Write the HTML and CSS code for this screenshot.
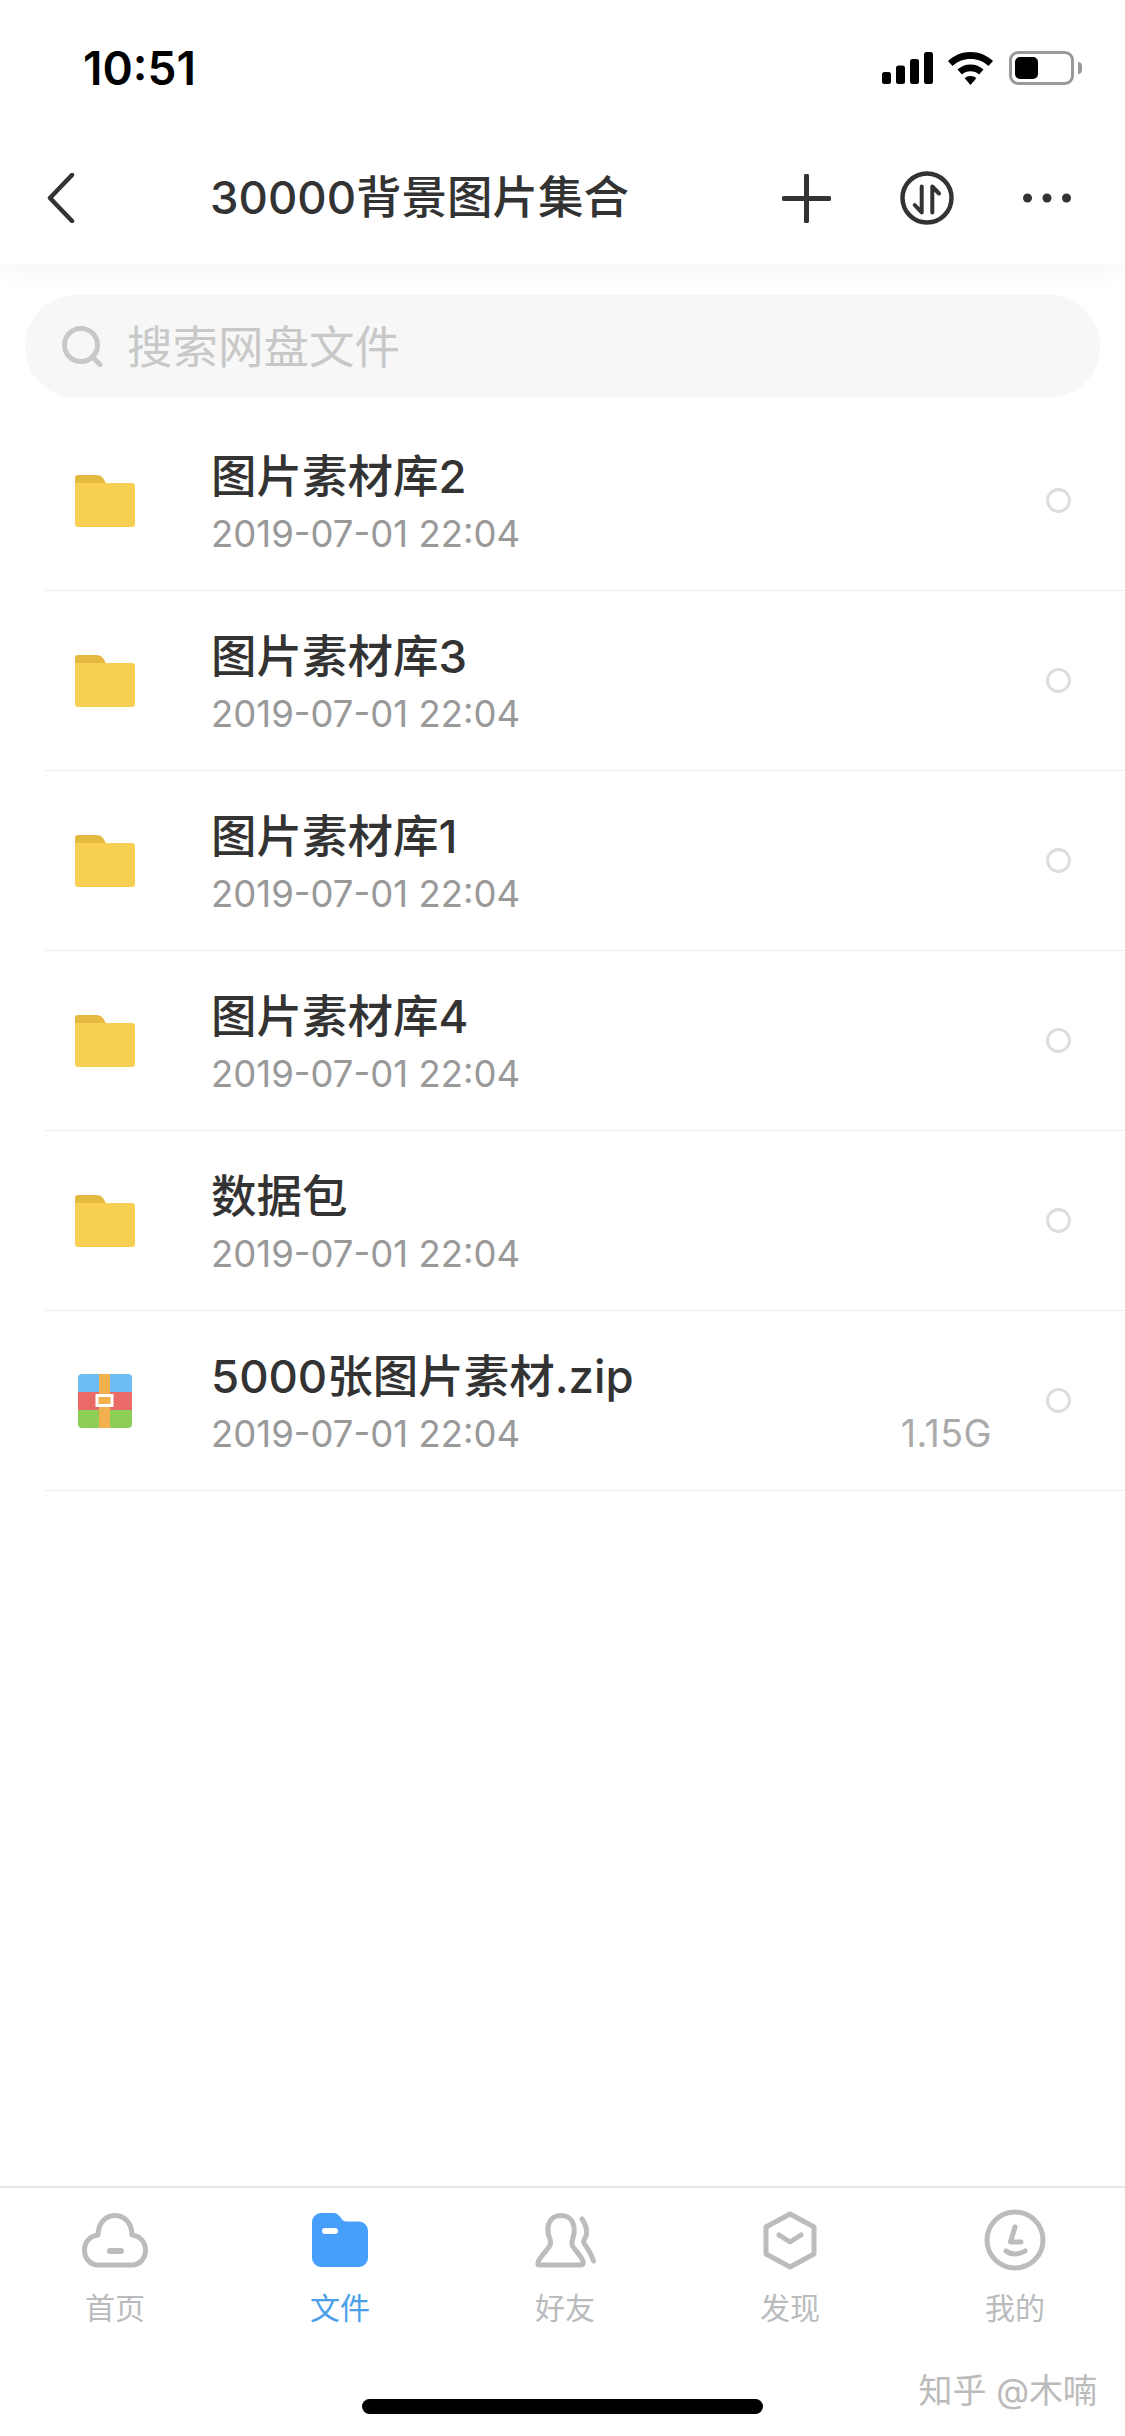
FILE: index.html
```html
<!DOCTYPE html>
<html lang="zh-CN">
<head>
<meta charset="utf-8">
<title>30000背景图片集合</title>
<link rel="stylesheet" href="styles.css">
</head>
<body>
<div class="screen">
  <div class="status">
    <span class="time">10:51</span>
    <div class="status-icons">
      <svg class="i-signal" viewBox="0 0 51 32"><rect x="0" y="20" width="9" height="12" rx="2.5"/><rect x="14" y="13.500" width="9" height="18.500" rx="2.500"/><rect x="28" y="7" width="9" height="25" rx="2.500"/><rect x="42" y="0" width="9" height="32" rx="2.500"/></svg>
      <svg class="i-wifi" viewBox="0 0 45 33"><path d="M22.500 0C31 0 39 3.300 45 9L40.500 14C35.700 9.600 29.300 7 22.500 7S9.300 9.600 4.500 14L0 9C6 3.300 14 0 22.500 0Z"/><path d="M22.500 12.500C27.500 12.500 32 14.400 35.500 17.600L31 22.500C28.700 20.500 25.700 19.300 22.500 19.300S16.300 20.500 14 22.500L9.500 17.600C13 14.400 17.500 12.500 22.500 12.500Z"/><path d="M22.500 24C24.700 24 26.800 24.800 28.300 26.200L22.500 33L16.700 26.200C18.200 24.800 20.300 24 22.500 24Z"/></svg>
      <div class="battery"><div class="battery-body"><div class="battery-fill"></div></div><div class="battery-nub"></div></div>
    </div>
  </div>

  <header class="nav">
    <svg class="i-back" viewBox="0 0 28 50"><path d="M25 2L3 25L25 48"/></svg>
    <h1 class="nav-title">30000背景图片集合</h1>
    <div class="nav-actions">
      <svg class="i-plus" viewBox="0 0 49 49"><path d="M24.500 2V47M2 24.500H47"/></svg>
      <svg class="i-sync" viewBox="0 0 54 54"><circle cx="27" cy="27" r="24.500"/><path class="arrows" d="M21.700 15.500V41.500L14.700 34M32.300 41.500V15.500L39 22.500"/></svg>
      <svg class="i-more" viewBox="0 0 48 10"><circle cx="4.500" cy="5" r="4.500"/><circle cx="24" cy="5" r="4.500"/><circle cx="43.500" cy="5" r="4.500"/></svg>
    </div>
  </header>

  <div class="search">
    <svg class="i-search" viewBox="0 0 41 41"><circle cx="19" cy="19" r="16.500"/><path d="M30.500 31L38 38.500"/></svg>
    <span class="search-text">搜索网盘文件</span>
  </div>

  <ul class="list">
    <li class="row">
      <div class="row-icon"><svg class="i-folder" viewBox="0 0 60 52"><path class="tab" d="M3 0H21C26 0 29 3 31 9H0V3A3 3 0 0 1 3 0Z"/><path class="body" d="M0 8H57A3 3 0 0 1 60 11V49A3 3 0 0 1 57 52H3A3 3 0 0 1 0 49Z"/></svg></div>
      <div class="row-text"><div class="row-name">图片素材库2</div><div class="row-meta"><span>2019-07-01 22:04</span></div></div>
      <span class="radio"></span>
    </li>
    <li class="row">
      <div class="row-icon"><svg class="i-folder" viewBox="0 0 60 52"><path class="tab" d="M3 0H21C26 0 29 3 31 9H0V3A3 3 0 0 1 3 0Z"/><path class="body" d="M0 8H57A3 3 0 0 1 60 11V49A3 3 0 0 1 57 52H3A3 3 0 0 1 0 49Z"/></svg></div>
      <div class="row-text"><div class="row-name">图片素材库3</div><div class="row-meta"><span>2019-07-01 22:04</span></div></div>
      <span class="radio"></span>
    </li>
    <li class="row">
      <div class="row-icon"><svg class="i-folder" viewBox="0 0 60 52"><path class="tab" d="M3 0H21C26 0 29 3 31 9H0V3A3 3 0 0 1 3 0Z"/><path class="body" d="M0 8H57A3 3 0 0 1 60 11V49A3 3 0 0 1 57 52H3A3 3 0 0 1 0 49Z"/></svg></div>
      <div class="row-text"><div class="row-name">图片素材库1</div><div class="row-meta"><span>2019-07-01 22:04</span></div></div>
      <span class="radio"></span>
    </li>
    <li class="row">
      <div class="row-icon"><svg class="i-folder" viewBox="0 0 60 52"><path class="tab" d="M3 0H21C26 0 29 3 31 9H0V3A3 3 0 0 1 3 0Z"/><path class="body" d="M0 8H57A3 3 0 0 1 60 11V49A3 3 0 0 1 57 52H3A3 3 0 0 1 0 49Z"/></svg></div>
      <div class="row-text"><div class="row-name">图片素材库4</div><div class="row-meta"><span>2019-07-01 22:04</span></div></div>
      <span class="radio"></span>
    </li>
    <li class="row">
      <div class="row-icon"><svg class="i-folder" viewBox="0 0 60 52"><path class="tab" d="M3 0H21C26 0 29 3 31 9H0V3A3 3 0 0 1 3 0Z"/><path class="body" d="M0 8H57A3 3 0 0 1 60 11V49A3 3 0 0 1 57 52H3A3 3 0 0 1 0 49Z"/></svg></div>
      <div class="row-text"><div class="row-name">数据包</div><div class="row-meta"><span>2019-07-01 22:04</span></div></div>
      <span class="radio"></span>
    </li>
    <li class="row">
      <div class="row-icon"><svg class="i-zip" viewBox="0 0 54 54"><path fill="#6dbdf3" d="M4 0H50A4 4 0 0 1 54 4V18H0V4A4 4 0 0 1 4 0Z"/><rect y="18" width="54" height="18" fill="#ea6a68"/><path fill="#8dcf56" d="M0 36H54V50A4 4 0 0 1 50 54H4A4 4 0 0 1 0 50Z"/><rect x="21" width="11" height="54" fill="#f2b04e"/><rect x="19" y="21.500" width="15" height="10" fill="#f2b04e" stroke="#fff" stroke-width="3"/></svg></div>
      <div class="row-text"><div class="row-name">5000张图片素材.zip</div><div class="row-meta"><span>2019-07-01 22:04</span><span class="row-size">1.15G</span></div></div>
      <span class="radio"></span>
    </li>
  </ul>

  <nav class="tabbar">
    <div class="tabs">
      <div class="tab-item">
        <div class="tab-icon"><svg class="i-cloud" viewBox="0 0 66 55"><path d="M16 52H50C58 52 63.500 45 63.500 37C63.500 29 58 23 50 22C50 11 43 2.500 33 2.500C23 2.500 16 11 16 22C8 23 2.500 29 2.500 37C2.500 45 8 52 16 52Z"/><rect class="fill" x="25" y="35" width="17" height="6" rx="3"/></svg></div>
        <span class="tab-label">首页</span>
      </div>
      <div class="tab-item active">
        <div class="tab-icon"><svg class="i-files" viewBox="0 0 56 54"><path fill="#46a0fb" d="M9 0H21C25 0 27 2 29 5C30.500 7.500 32 8.500 35 8.500H47A9 9 0 0 1 56 17.500V45A9 9 0 0 1 47 54H9A9 9 0 0 1 0 45V9A9 9 0 0 1 9 0Z"/><rect x="10" y="15" width="16" height="6" rx="3" fill="#fff"/></svg></div>
        <span class="tab-label">文件</span>
      </div>
      <div class="tab-item">
        <div class="tab-icon"><svg class="i-friends" viewBox="0 0 61 55"><path d="M4 52H46C48.500 52 49 49.500 47 46C45 42 40 37 37.500 33C36 30 37 28 38 25C39.500 21 39.500 17 39 14C38 7 33 2.500 26 2.500C19 2.500 14 7 13 14C12.500 18 13 22 15 26C16 29 16 31 14 34C11 38 7 42 4 47C2.500 49.500 2.500 52 4 52Z"/><path d="M47 6C51 12 52.500 18 51 23C50 26 47.500 27 49 30C52 35 56 40 58.500 48"/></svg></div>
        <span class="tab-label">好友</span>
      </div>
      <div class="tab-item">
        <div class="tab-icon"><svg class="i-discover" viewBox="0 0 54 59"><path d="M27 3L51 16V43L27 56L3 43V16Z"/><path d="M16 24L27 31L38 24"/></svg></div>
        <span class="tab-label">发现</span>
      </div>
      <div class="tab-item">
        <div class="tab-icon"><svg class="i-me" viewBox="0 0 62 62"><circle cx="31" cy="31" r="28"/><path d="M31 18L26.500 33H37M22 42C27 46 35 46 41 42"/></svg></div>
        <span class="tab-label">我的</span>
      </div>
    </div>
    <div class="home-bar"></div>
    <div class="watermark">知乎 @木喃</div>
  </nav>
</div>
</body>
</html>
```

FILE: styles.css
```css
* { box-sizing: border-box; margin: 0; padding: 0; }
html, body { background: #fff; }
body { font-family: Inter, "Noto Sans CJK SC", sans-serif; color: #333; }
svg { display: block; }

.screen { width: 1125px; height: 2436px; display: flex; flex-direction: column; overflow: hidden; background: #fff; }

.status { height: 96px; padding: 40px 43px 0 83px; display: flex; align-items: center; justify-content: space-between; flex: none; background: #fff; position: relative; z-index: 1; }
.time { font-size: 46px; font-weight: 600; color: #000; }
.status-icons { display: flex; align-items: center; }
.i-signal { width: 51px; height: 32px; fill: #000; }
.i-wifi { width: 45px; height: 33px; fill: #000; margin-left: 15px; }
.battery { display: flex; align-items: center; margin-left: 16px; }
.battery-body { width: 65px; height: 34px; border: 3px solid #999; border-radius: 9px; padding: 3px; }
.battery-fill { width: 23px; height: 22px; background: #000; border-radius: 5px; }
.battery-nub { width: 4px; height: 12px; background: #999; border-radius: 0 4px 4px 0; margin-left: 4px; }

.nav { height: 168px; padding: 36px 54px 0 47px; display: flex; align-items: center; background: #fff; flex: none; box-shadow: 0 6px 24px rgba(0, 0, 0, 0.04); }
.i-back { width: 28px; height: 50px; fill: none; stroke: #333; stroke-width: 4.5; stroke-linecap: round; stroke-linejoin: round; }
.nav-title { margin-left: 135px; font-size: 45.5px; font-weight: 500; color: #333; line-height: 60px; }
.nav-actions { margin-left: auto; display: flex; align-items: center; gap: 69px; }
.i-plus { width: 49px; height: 49px; fill: none; stroke: #333; stroke-width: 5; stroke-linecap: round; }
.i-sync { width: 54px; height: 54px; fill: none; stroke: #333; stroke-width: 4.5; stroke-linecap: round; stroke-linejoin: round; }
.i-sync .arrows { stroke-width: 4; }
.i-more { width: 48px; height: 10px; fill: #333; }

.search { margin: 31px 25px 13px; height: 103px; border-radius: 52px; background: #f7f7f7; display: flex; align-items: center; padding-left: 37px; flex: none; }
.i-search { width: 41px; height: 41px; fill: none; stroke: #c8c8c8; stroke-width: 5; stroke-linecap: round; }
.search-text { margin-left: 24px; font-size: 45.5px; color: #c8c8c8; position: relative; top: -3px; }

.list { list-style: none; flex: none; }
.row { height: 180px; margin-left: 45px; padding: 0 54px 0 30px; border-bottom: 1px solid #eee; display: flex; align-items: center; }
.row-icon { width: 60px; margin-right: 76px; display: flex; justify-content: center; flex: none; }
.i-folder { width: 60px; height: 52px; }
.i-folder .tab { fill: #e3b93f; }
.i-folder .body { fill: #f6cf53; }
.i-zip { width: 54px; height: 54px; }
.row-text { flex: 1; min-width: 0; }
.row-name { font-size: 45.5px; font-weight: 500; line-height: 60px; margin-top: 3px; color: #333; }
.row-meta { display: flex; justify-content: space-between; align-items: baseline; font-size: 36.5px; line-height: 46px; color: #999; margin-top: 4px; }
.row-size { font-size: 37.5px; letter-spacing: 0.5px; color: #aaa; }
.radio { width: 25px; height: 25px; margin-left: 54px; border: 3.5px solid #ddd; border-radius: 50%; flex: none; }

.tabbar { margin-top: auto; border-top: 2px solid #e6e6e6; flex: none; height: 250px; position: relative; }
.tabs { display: grid; grid-template-columns: repeat(5, 225px); padding: 21px 0 0 2.5px; }
.tab-item { display: flex; flex-direction: column; align-items: center; }
.tab-icon { height: 62px; display: flex; align-items: center; }
.tab-icon svg { fill: none; stroke: #babcbe; stroke-width: 5; stroke-linecap: round; stroke-linejoin: round; }
.tab-icon svg.i-files { stroke: none; }
.tab-icon .fill { fill: #babcbe; stroke: none; }
.i-cloud { width: 66px; height: 55px; }
.i-files { width: 56px; height: 54px; }
.i-friends { width: 61px; height: 55px; }
.i-discover { width: 54px; height: 59px; }
.i-me { width: 62px; height: 62px; }
.tab-label { margin-top: 19px; font-size: 30px; line-height: 36px; color: #b9bbbd; }
.tab-item.active .tab-label { color: #4a9fe8; }
.home-bar { width: 401px; height: 15px; border-radius: 8px; background: #000; margin: 73px auto 0; }
.watermark { position: absolute; right: 28px; top: 180px; font-size: 34px; line-height: 46px; color: #bbb; }
```
